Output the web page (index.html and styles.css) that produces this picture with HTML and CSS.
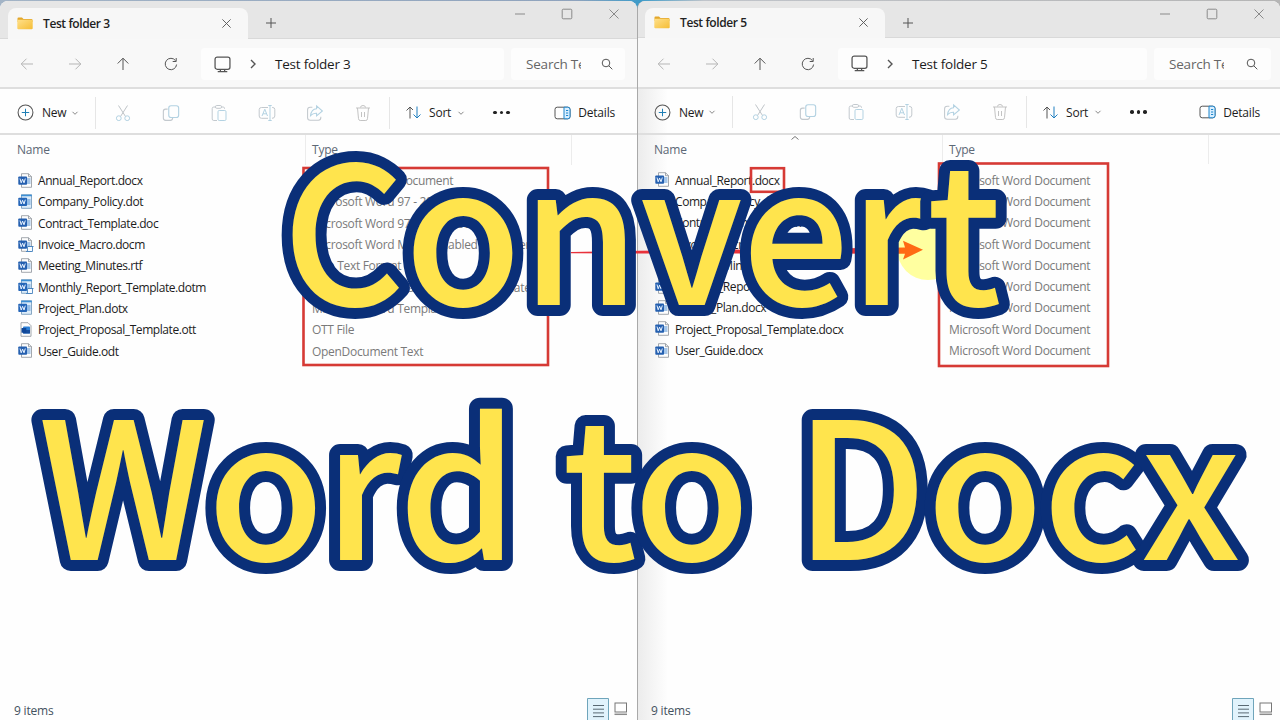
FILE: index.html
```html
<!DOCTYPE html>
<html lang="en">
<head>
  <meta charset="UTF-8">
  <meta name="viewport" content="width=device-width, initial-scale=1.0">
  <title>Convert Word to Docx</title>
  <link rel="stylesheet" href="styles.css">
</head>
<body>
  <!-- Icon sprite -->
  <svg class="sprite" aria-hidden="true">
    <defs>
      <linearGradient id="gold" x1="0" y1="0" x2="1" y2="1"><stop offset="0" stop-color="#ffe08a"/><stop offset="1" stop-color="#f5bd35"/></linearGradient>
      <linearGradient id="arrowFill" x1="0" x2="1"><stop offset="0" stop-color="#e8323c"/><stop offset=".85" stop-color="#ea3136"/><stop offset=".94" stop-color="#ff6a14"/></linearGradient>
    </defs>
    <symbol id="folder" viewBox="0 0 16 13"><path d="M.5 1.5Q.5.5 1.5.5H5L6.5 2H14.500Q15.500 2 15.500 3V5H.5z" fill="#e3a72b"/><rect x=".3" y="2.800" width="15.400" height="9.500" rx="1" fill="url(#gold)"/></symbol>
    <symbol id="close" viewBox="0 0 12 12"><path d="M1.500 1.500l9 9M10.500 1.500l-9 9"/></symbol>
    <symbol id="plus" viewBox="0 0 12 12"><path d="M6 1v10M1 6h10"/></symbol>
    <symbol id="min" viewBox="0 0 12 12"><path d="M1 6h10"/></symbol>
    <symbol id="max" viewBox="0 0 12 12"><rect x="1.200" y="1.200" width="9.600" height="9.600" rx="1"/></symbol>
    <symbol id="back" viewBox="0 0 14 14"><path d="M13 7H1.300M6.500 1.700L1.200 7l5.300 5.300"/></symbol>
    <symbol id="fwd" viewBox="0 0 14 14"><path d="M1 7h11.700M7.500 1.700L12.800 7l-5.300 5.300"/></symbol>
    <symbol id="up" viewBox="0 0 14 14"><path d="M7 13V1.300M1.700 6.500L7 1.200l5.300 5.300"/></symbol>
    <symbol id="reload" viewBox="0 0 14 14"><path d="M12.600 7.500A5.700 5.700 0 1 1 11.500 3.600M12.200 1v3.500H8.700"/></symbol>
    <symbol id="pc" viewBox="0 0 16 16"><rect x="1" y="1" width="14" height="11.500" rx="2"/><path d="M3.500 14.700h9M6 12.500v2M10 12.500v2"/></symbol>
    <symbol id="right" viewBox="0 0 8 10"><path d="M2 1l4 4-4 4"/></symbol>
    <symbol id="down" viewBox="0 0 8 8"><path d="M1.500 2.800L4 5.300l2.500-2.500"/></symbol>
    <symbol id="search" viewBox="0 0 12 12"><circle cx="5" cy="5" r="3.800"/><path d="M7.800 7.800l3.500 3.500"/></symbol>
    <symbol id="new" viewBox="0 0 16 16"><circle cx="8" cy="8" r="7" stroke="#555"/><path d="M8 4.500v7M4.500 8h7" stroke="#1f7fb5"/></symbol>
    <symbol id="cut" viewBox="0 0 16 18"><path d="M3.500 1.500L10.500 12.500M12.500 1.500L5.500 12.500" stroke="#bfc4c8"/><circle cx="3.800" cy="14.200" r="2.400"/><circle cx="12.200" cy="14.200" r="2.400"/></symbol>
    <symbol id="copy" viewBox="0 0 16 16"><path d="M5 4.500H3.200Q1.200 4.500 1.200 6.500v6Q1.200 14.500 3.200 14.500H7.500Q9.300 14.500 9.500 12.300" stroke="#c3c9ce"/><rect x="6" y="1.500" width="8.800" height="10.500" rx="2"/></symbol>
    <symbol id="paste" viewBox="0 0 16 18"><path d="M5 3H2.800Q1.200 3 1.200 4.500v10.500Q1.200 16.500 2.800 16.500H6M10 3h2.200Q13.500 3 13.500 4.500V5" stroke="#c3c9ce"/><rect x="4.500" y="1.500" width="6" height="2.800" rx="1.200" stroke="#c3c9ce"/><rect x="7" y="6.500" width="8" height="10" rx="1.200"/></symbol>
    <symbol id="rename" viewBox="0 0 18 18"><path d="M10 3.500H3.500Q1.200 3.500 1.200 5.500v6.500Q1.200 14.300 3.500 14.300H10M14 3.500h.8Q16.800 3.500 16.800 5.500v6.500Q16.800 14.300 14 14.300" stroke="#c3c9ce"/><path d="M4 12l2.800-6.800L9.500 12M5 9.800h3.500M12 1.500v15M10.300 1.500h3.400M10.300 16.500h3.400"/></symbol>
    <symbol id="share" viewBox="0 0 17 17"><path d="M6 3H4Q1.500 3 1.500 5.500v7.500Q1.500 15.300 4 15.300h7.800Q14 15.300 14 12.800V12" stroke="#c3c9ce"/><path d="M10 1.800l5.500 4.800L10 11.300V8.700Q6.500 8.500 4.300 11 5 4.800 10 4.500z"/></symbol>
    <symbol id="trash" viewBox="0 0 16 18"><path d="M1 4h14M5.500 3.500Q5.500 1.500 8 1.500t2.500 2M2.500 4l1 10.700Q3.700 16.500 5.200 16.500h5.600Q12.300 16.500 12.500 14.700L13.500 4M6.500 8v5M9.500 8v5"/></symbol>
    <symbol id="sort" viewBox="0 0 18 14"><path d="M5 13V1.500M1.500 5L5 1.500 8 4.500" stroke="#555"/><path d="M12 1v11.500M8.500 9l3.500 3.500L15.500 9" stroke="#1f7fc0"/></symbol>
    <symbol id="details" viewBox="0 0 17 14"><rect x="1" y="1.200" width="15" height="11.600" rx="2.200" stroke="#555"/><path d="M10 1.200H13.800Q16 1.200 16 3.400V10.600Q16 12.800 13.800 12.800H10z" fill="#d9efff" stroke="#1f86cc"/><path d="M12 4.500h2.200M12 7h2.200M12 9.500h2.200" stroke="#1f86cc"/></symbol>
    <symbol id="doc" viewBox="0 0 16 16"><path d="M3.500.7H10.500L13.500 3.700V14.300H3.500z" fill="#fdfdfd" stroke="#8b9299" stroke-width=".8"/><path d="M10.500.7V3.700H13.500" fill="none" stroke="#8b9299" stroke-width=".8"/><path d="M9 6h3.500M9 8h3.500M9 10h3.500" stroke="#4d8fd6"/><rect x=".3" y="3.500" width="8.700" height="8.300" rx=".8" fill="#2560b0"/><path d="M2 5.500l1.200 4.300 1.400-3.700L6 9.800l1.300-4.300" fill="none" stroke="#e8f2ff" stroke-width="1"/></symbol>
    <symbol id="dot" viewBox="0 0 16 16"><path d="M3.500.7H13.500V14.300H3.500z" fill="#dcecf9" stroke="#6c93b5" stroke-width=".8"/><path d="M3 1.500h10.800" stroke="#3d90d6" stroke-width="1.600"/><path d="M9 6h3.500M9 8h3.500M9 10h3.500" stroke="#4d8fd6"/><rect x=".3" y="3.700" width="8.700" height="8.300" rx=".8" fill="#2566b8"/><path d="M2 5.700l1.200 4.300 1.400-3.700L6 10l1.300-4.300" fill="none" stroke="#e8f2ff" stroke-width="1"/></symbol>
    <symbol id="macro" viewBox="0 0 16 16"><path d="M9.500 9.500h5v5h-5z" fill="#f7fbff" stroke="#4c86bf" stroke-width=".9"/><path d="M8 14.500h5.500M10 9.500h5.500" stroke="#4c86bf"/></symbol>
    <symbol id="ott" viewBox="0 0 16 16"><path d="M3 .7H10L13 3.700V14.300H3z" fill="#fdfdfd" stroke="#8b9299" stroke-width=".8"/><rect x="5" y="4.500" width="7" height="7" rx=".8" fill="#2a7fd6"/><rect x="5" y="8" width="7" height="3.500" fill="#174f9f"/><rect x="3.500" y="6" width="4.800" height="4.800" rx=".5" fill="#0f4799"/></symbol>
    <symbol id="list" viewBox="0 0 22 24"><path d="M.5 24V.5h21V24" fill="#e1f3fc" stroke="#6fa5bb"/><path d="M6 7.500h11M6 11.200h11M6 14.900h11M6 18.600h11" stroke="#596a74"/></symbol>
    <symbol id="thumb" viewBox="0 0 14 14"><rect x="1" y="1" width="11.500" height="9" fill="#fff" stroke="#777"/><path d="M.5 12.300h12.500" stroke="#8b8b8b" stroke-width="1.500"/></symbol>
  </svg>

  <div class="stage">
    <!-- Source folder -->
    <div class="window left">
      <div class="titlebar">
        <div class="tab"><svg class="folder"><use href="#folder"/></svg><span>Test folder 3</span><svg class="ic x"><use href="#close"/></svg></div>
        <svg class="ic plus"><use href="#plus"/></svg>
        <div class="controls"><svg class="ic"><use href="#min"/></svg><svg class="ic"><use href="#max"/></svg><svg class="ic"><use href="#close"/></svg></div>
      </div>
      <div class="nav">
        <svg class="ic faded"><use href="#back"/></svg><svg class="ic faded"><use href="#fwd"/></svg><svg class="ic"><use href="#up"/></svg><svg class="ic"><use href="#reload"/></svg>
        <div class="address"><svg class="ic pc"><use href="#pc"/></svg><svg class="ic chev"><use href="#right"/></svg><span>Test folder 3</span></div>
        <div class="search"><span>Search Test</span><svg class="ic"><use href="#search"/></svg></div>
      </div>
      <div class="toolbar">
        <div class="new"><svg class="ic"><use href="#new"/></svg><span>New</span><svg class="ic tiny"><use href="#down"/></svg></div>
        <div class="tools"><svg class="ic"><use href="#cut"/></svg><svg class="ic"><use href="#copy"/></svg><svg class="ic"><use href="#paste"/></svg><svg class="ic"><use href="#rename"/></svg><svg class="ic"><use href="#share"/></svg><svg class="ic gray"><use href="#trash"/></svg></div>
        <div class="sort"><svg class="ic"><use href="#sort"/></svg><span>Sort</span><svg class="ic tiny"><use href="#down"/></svg></div>
        <div class="dots"><i></i><i></i><i></i></div>
        <div class="details"><svg class="ic"><use href="#details"/></svg><span>Details</span></div>
      </div>
      <div class="head"><span>Name</span><span>Type</span></div>
      <div class="files">
        <div class="row"><svg><use href="#doc"/></svg><span>Annual_Report.docx</span><em>Microsoft Word Document</em></div>
        <div class="row"><svg><use href="#dot"/></svg><span>Company_Policy.dot</span><em>Microsoft Word 97 - 2003 Template</em></div>
        <div class="row"><svg><use href="#doc"/></svg><span>Contract_Template.doc</span><em>Microsoft Word 97 - 2003 Document</em></div>
        <div class="row"><svg><use href="#doc"/><use href="#macro"/></svg><span>Invoice_Macro.docm</span><em>Microsoft Word Macro-Enabled Document</em></div>
        <div class="row"><svg><use href="#doc"/></svg><span>Meeting_Minutes.rtf</span><em>Rich Text Format</em></div>
        <div class="row"><svg><use href="#dot"/><use href="#macro"/></svg><span>Monthly_Report_Template.dotm</span><em>Microsoft Word Macro-Enabled Template</em></div>
        <div class="row"><svg><use href="#dot"/></svg><span>Project_Plan.dotx</span><em>Microsoft Word Template</em></div>
        <div class="row"><svg><use href="#ott"/></svg><span>Project_Proposal_Template.ott</span><em>OTT File</em></div>
        <div class="row"><svg><use href="#doc"/></svg><span>User_Guide.odt</span><em>OpenDocument Text</em></div>
      </div>
      <div class="status"><span>9 items</span><svg class="list"><use href="#list"/></svg><svg class="thumb"><use href="#thumb"/></svg></div>
    </div>

    <!-- Converted folder -->
    <div class="window right">
      <div class="titlebar">
        <div class="tab"><svg class="folder"><use href="#folder"/></svg><span>Test folder 5</span><svg class="ic x"><use href="#close"/></svg></div>
        <svg class="ic plus"><use href="#plus"/></svg>
        <div class="controls"><svg class="ic"><use href="#min"/></svg><svg class="ic"><use href="#max"/></svg><svg class="ic"><use href="#close"/></svg></div>
      </div>
      <div class="nav">
        <svg class="ic faded"><use href="#back"/></svg><svg class="ic faded"><use href="#fwd"/></svg><svg class="ic"><use href="#up"/></svg><svg class="ic"><use href="#reload"/></svg>
        <div class="address"><svg class="ic pc"><use href="#pc"/></svg><svg class="ic chev"><use href="#right"/></svg><span>Test folder 5</span></div>
        <div class="search"><span>Search Test</span><svg class="ic"><use href="#search"/></svg></div>
      </div>
      <div class="toolbar">
        <div class="new"><svg class="ic"><use href="#new"/></svg><span>New</span><svg class="ic tiny"><use href="#down"/></svg></div>
        <div class="tools"><svg class="ic"><use href="#cut"/></svg><svg class="ic"><use href="#copy"/></svg><svg class="ic"><use href="#paste"/></svg><svg class="ic"><use href="#rename"/></svg><svg class="ic"><use href="#share"/></svg><svg class="ic gray"><use href="#trash"/></svg></div>
        <div class="sort"><svg class="ic"><use href="#sort"/></svg><span>Sort</span><svg class="ic tiny"><use href="#down"/></svg></div>
        <div class="dots"><i></i><i></i><i></i></div>
        <div class="details"><svg class="ic"><use href="#details"/></svg><span>Details</span></div>
      </div>
      <div class="head"><span>Name</span><span>Type</span></div>
      <div class="files">
        <div class="row"><svg><use href="#doc"/></svg><span>Annual_Report.docx</span><em>Microsoft Word Document</em></div>
        <div class="row"><svg><use href="#doc"/></svg><span>Company_Policy.docx</span><em>Microsoft Word Document</em></div>
        <div class="row"><svg><use href="#doc"/></svg><span>Contract_Template.docx</span><em>Microsoft Word Document</em></div>
        <div class="row"><svg><use href="#doc"/></svg><span>Invoice_Macro.docx</span><em>Microsoft Word Document</em></div>
        <div class="row"><svg><use href="#doc"/></svg><span>Meeting_Minutes.docx</span><em>Microsoft Word Document</em></div>
        <div class="row"><svg><use href="#doc"/></svg><span>Monthly_Report_Template.docx</span><em>Microsoft Word Document</em></div>
        <div class="row"><svg><use href="#doc"/></svg><span>Project_Plan.docx</span><em>Microsoft Word Document</em></div>
        <div class="row"><svg><use href="#doc"/></svg><span>Project_Proposal_Template.docx</span><em>Microsoft Word Document</em></div>
        <div class="row"><svg><use href="#doc"/></svg><span>User_Guide.docx</span><em>Microsoft Word Document</em></div>
      </div>
      <div class="status"><span>9 items</span><svg class="list"><use href="#list"/></svg><svg class="thumb"><use href="#thumb"/></svg></div>
    </div>

    <!-- Highlights, arrow and caption over both windows -->
    <svg class="overlay" viewBox="0 0 1280 720">
      <path d="M791.500 139.500l3.500-3 3.500 3" fill="none" stroke="#777"/>
      <circle cx="928" cy="249" r="31" fill="#ffffa0"/>
      <g fill="none" stroke="#d63a35" stroke-width="2.600">
        <rect x="303.500" y="168" width="244.500" height="197"/>
        <rect x="939" y="163.500" width="169" height="202.500"/>
        <rect x="751" y="168.200" width="33" height="23.600"/>
      </g>
      <path d="M571 252L640 250.800 905 247.500 903 240.800 923 249.800 903 259.500 905 253.800 640 253.400 571 253.200z" fill="url(#arrowFill)"/>
      <g class="caption">
        <text x="282" y="304.500" textLength="720">Convert</text>
        <text x="38" y="560" textLength="1203">Word to Docx</text>
      </g>
    </svg>
  </div>
</body>
</html>
```
FILE: styles.css
```css
* { box-sizing: border-box; }
body {
  margin: 0;
  width: 1280px;
  height: 720px;
  overflow: hidden;
  font-family: "Open Sans", "Noto Sans", sans-serif;
  font-size: 12px;
  color: #1c1c1c;
  background: #4b9cc4;
}
.sprite {
  position: absolute;
  width: 0;
  height: 0;
}
.stage {
  position: relative;
  display: flex;
  width: 1280px;
  height: 720px;
  background: linear-gradient(90deg, #a3b4c6, #8fa3bd 45%, #3d9bc9 50%, #c0c4ca 55%, #b5b5b5);
}
.window {
  display: flex;
  flex-direction: column;
  height: 719px;
  margin-top: 1px;
  background: #fefefe;
  border-radius: 8px 8px 0 0;
  overflow: hidden;
  white-space: nowrap;
}
.left {
  width: 637px;
}
.right {
  width: 643px;
  border-left: 1px solid #a9a9a9;
  background: linear-gradient(90deg, #ececec, #fefefe 30px);
}
.ic {
  width: 14px;
  height: 14px;
  flex: none;
  fill: none;
  stroke: #555;
  stroke-width: 1;
}

/* Title bar */
.titlebar {
  display: flex;
  height: 38px;
  flex: none;
  padding-left: 8px;
  background: #e6e6e6;
  border-bottom: 1px solid #d9d9d9;
}
.tab {
  display: flex;
  align-items: center;
  width: 240px;
  height: 32px;
  margin-top: 7px;
  padding: 0 16px 2px 9px;
  background: #f7f7f7;
  border-radius: 8px 8px 0 0;
  font-weight: 600;
  color: #222;
}
.tab span {
  flex: 1;
  margin-left: 10px;
  letter-spacing: -0.4px;
}
.folder {
  width: 16px;
  height: 13px;
}
.tab .x {
  width: 11px;
  height: 11px;
}
.plus {
  width: 12px;
  height: 12px;
  margin: 16px 0 0 17px;
}
.controls {
  display: flex;
  gap: 35px;
  margin: 7px 17px 0 auto;
}
.controls .ic {
  width: 12px;
  height: 12px;
  stroke: #8a8a8a;
}

/* Navigation */
.nav {
  display: flex;
  align-items: center;
  height: 50px;
  flex: none;
  padding: 2px 12px 0 20px;
  background: #f8f8f8;
  border-bottom: 2px solid #dedede;
}
.nav > .ic {
  margin-right: 34px;
}
.nav > .faded {
  stroke: #b5b5b5;
}
.address,
.search {
  display: flex;
  align-items: center;
  height: 32px;
  background: #fdfdfd;
  border-radius: 4px;
}
.address {
  flex: 1;
  margin-left: -11px;
  padding-left: 13px;
  font-size: 13.5px;
}
.address .pc {
  width: 17px;
  height: 17px;
  stroke-width: 1.2;
}
.chev {
  width: 8px;
  height: 10px;
  margin: 0 18px;
  stroke-width: 1.4;
}
.address span {
  letter-spacing: -0.22px;
}
.search {
  width: 114px;
  margin-left: 7px;
  padding: 0 12px 0 15px;
  font-size: 13.5px;
  color: #666;
}
.search span {
  width: 55px;
  overflow: hidden;
  letter-spacing: -0.2px;
}
.search .ic {
  width: 12px;
  height: 12px;
  margin-left: auto;
}

/* Commands */
.toolbar {
  display: flex;
  align-items: center;
  height: 46px;
  flex: none;
  padding: 3px 22px 0 17px;
  border-bottom: 2px solid #dedede;
}
.toolbar span {
  letter-spacing: -0.2px;
}
.new {
  display: flex;
  align-items: center;
  width: 79px;
  height: 32px;
  border-right: 1px solid #e6e6e6;
}
.new .ic:first-child {
  width: 17px;
  height: 17px;
}
.new span {
  margin: 0 5px 0 8px;
}
.toolbar .tiny {
  width: 8px;
  height: 8px;
  stroke: #888;
}
.tools {
  display: flex;
  align-items: center;
  gap: 30px;
  width: 294px;
  height: 32px;
  padding-left: 18px;
  border-right: 1px solid #e6e6e6;
}
.tools .ic {
  width: 18px;
  height: 18px;
  stroke: #b3d2e2;
}
.tools .gray {
  stroke: #c3c3c3;
}
.sort {
  display: flex;
  align-items: center;
  margin-left: 15px;
}
.sort .ic:first-child {
  width: 18px;
  height: 15px;
}
.sort span {
  margin: 0 6px 0 6px;
}
.dots {
  display: flex;
  gap: 3px;
  margin-left: 28px;
}
.dots i {
  width: 3.500px;
  height: 3.500px;
  border-radius: 50%;
  background: #222;
}
.details {
  display: flex;
  align-items: center;
  margin-left: auto;
}
.details .ic {
  width: 17px;
  height: 14px;
  margin-right: 7px;
}

/* File list */
.head {
  display: grid;
  grid-template-columns: 289px 266px;
  height: 29px;
  flex: none;
  padding-left: 17px;
  color: #5c6876;
  line-height: 30px;
}
.head span {
  border-right: 1px solid #ececec;
  letter-spacing: -0.2px;
}
.head span + span {
  padding-left: 6px;
}
.files {
  padding-top: 6px;
  flex: 1;
}
.row {
  display: grid;
  grid-template-columns: 20px 274px auto;
  align-items: center;
  height: 21.300px;
  padding-left: 18px;
}
.row svg {
  width: 16px;
  height: 16px;
}
.row span,
.row em {
  font-style: normal;
}
.row span {
  letter-spacing: -0.43px;
}
.row em {
  color: #7a7a7a;
  letter-spacing: -0.3px;
}

/* Status bar */
.status {
  display: flex;
  height: 22px;
  flex: none;
  padding: 0 9px 0 14px;
  color: #44525f;
}
.status span {
  flex: 1;
  line-height: 26px;
  letter-spacing: -0.2px;
}
.list {
  width: 22px;
  height: 24px;
}
.thumb {
  width: 14px;
  height: 14px;
  margin: 4px 0 0 5px;
}

/* Second window sits slightly higher and wider */
.right .titlebar {
  height: 37px;
  padding-left: 7px;
}
.right .tab {
  height: 31px;
}
.right .controls {
  margin-right: 15px;
}
.right .nav {
  height: 51px;
  padding: 2px 9px 0 19px;
}
.right .search {
  width: 117px;
  padding-right: 13px;
}
.right .toolbar {
  padding: 2px 20px 0 16px;
}
.right .head {
  padding-left: 16px;
  line-height: 29px;
}
.right .row {
  padding-left: 17px;
}
.right .files {
  padding-top: 5.500px;
}
.right .status {
  padding: 0 7px 0 13px;
}

.overlay {
  position: absolute;
  left: 0;
  top: 0;
  width: 1280px;
  height: 720px;
}
.caption {
  font-family: "Noto Sans CJK SC", sans-serif;
  font-size: 190.5px;
  font-weight: 500;
  word-spacing: 3px;
  fill: #ffe44d;
  stroke: #0a2f78;
  stroke-width: 22px;
  stroke-linejoin: round;
  paint-order: stroke;
}
```
